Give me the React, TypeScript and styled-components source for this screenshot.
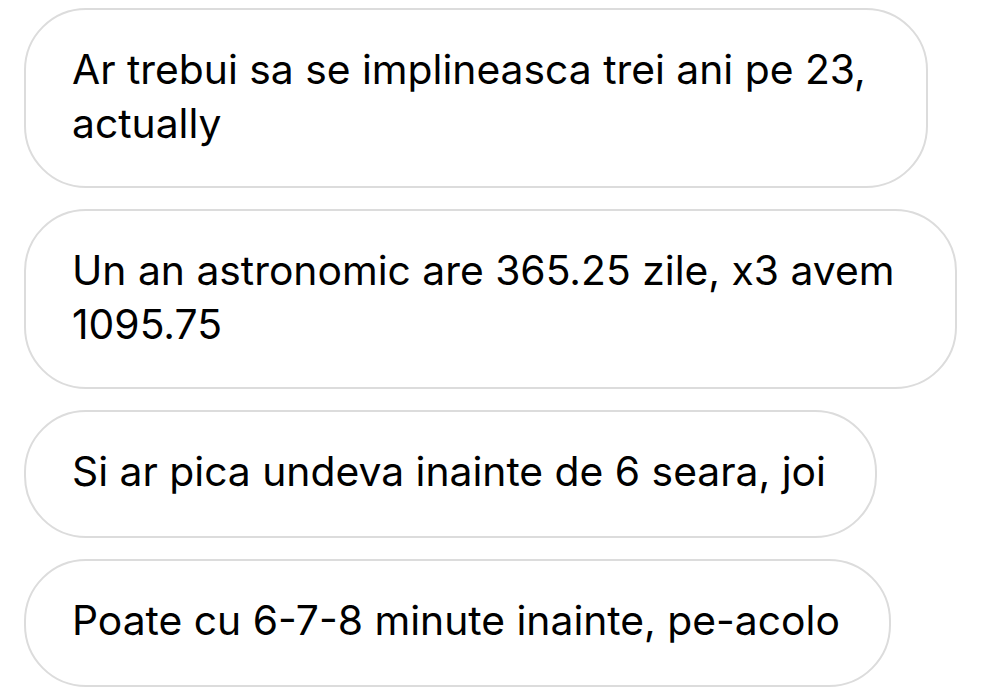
import React from "react";
import styled, { createGlobalStyle } from "styled-components";

const GlobalStyle = createGlobalStyle`
  html, body {
    margin: 0;
    padding: 0;
    background: #ffffff;
  }
`;

const Thread = styled.div`
  display: flex;
  flex-direction: column;
  align-items: flex-start;
  gap: 21px;
  padding: 8px 0 0 24px;
  font-family: Inter, "Liberation Sans", sans-serif;
`;

const Bubble = styled.div`
  box-sizing: border-box;
  width: fit-content;
  min-height: 128px;
  border: 2px solid #dcdcdc;
  border-radius: 62px;
  padding: 32px 49px 36px 46px;
  font-size: 40.8px;
  line-height: 54px;
  color: #000000;
  background: #ffffff;
`;

// wrapped lines keep their trailing space, as the bubble in the chat does
const messages: string[][] = [
  ["Ar trebui sa se implineasca trei ani pe 23,\u00a0", "actually"],
  ["Un an astronomic are 365.25 zile, x3 avem\u00a0", "1095.75"],
  ["Si ar pica undeva inainte de 6 seara, joi"],
  ["Poate cu 6-7-8 minute inainte, pe-acolo"],
];

export default function App() {
  return (
    <>
      <GlobalStyle />
      <Thread>
        {messages.map((lines, i) => (
          <Bubble key={i}>
            {lines.map((line, j) => (
              <React.Fragment key={j}>
                {j > 0 && <br />}
                {line}
              </React.Fragment>
            ))}
          </Bubble>
        ))}
      </Thread>
    </>
  );
}
